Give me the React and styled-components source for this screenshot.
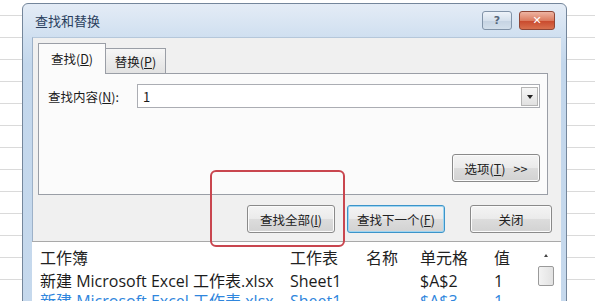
import React from 'react'
import styled, {createGlobalStyle, css} from 'styled-components'

const Global = createGlobalStyle`
body {
  margin: 0;
  background: #fff;
  font-family: "Noto Sans CJK SC", "Noto Sans", sans-serif;
  color: #1b1b1b;
}
`

const Page = styled.div`
position: relative;
width: 595px;
height: 301px;
overflow: hidden;
box-sizing: border-box;
padding: 3px 0 0 22px;
background: repeating-linear-gradient(to bottom, transparent 0 15px, #dadada 15px 16px, transparent 16px 22px);
`

const Window = styled.div`
width: 545px;
height: 320px;
box-sizing: border-box;
border: 1px solid #74869b;
border-radius: 6px 6px 0 0;
background: linear-gradient(#e4ecf6, #cfdff0 34px, #c3d7ec 60px, #c6d9ed);
display: flex;
flex-direction: column;
`

const TitleBar = styled.div`
height: 33px;
display: flex;
align-items: center;
padding: 0 11px 0 12px;
`

const Title = styled.div`
flex: 1;
font-size: 13px;
color: #2a3f5e;
`

const capBtn = css`
height: 19px;
box-sizing: border-box;
border-radius: 3px;
display: flex;
align-items: center;
justify-content: center;
font-family: "DejaVu Sans", sans-serif;
`

const HelpBtn = styled.div`
${capBtn}
width: 30px;
margin-right: 7px;
border: 1px solid #8193a8;
background: linear-gradient(#eef3f9, #d6e1ed 50%, #c5d3e2 51%, #d3dfeb);
color: #56667a;
font-size: 11px;
font-weight: bold;
`

const CloseBtn = styled.div`
${capBtn}
width: 36px;
border: 1px solid #8e4636;
background: linear-gradient(#eeb4a2, #dc7c60 50%, #c8482c 51%, #d8704e);
color: #fff;
font-weight: bold;
font-size: 11px;
`

const Body = styled.div`
flex: 1;
margin: 0 5px 0 9px;
background: #f0f0f0;
border-left: 1px solid #9db1c8;
border-top: 1px solid #b5c7da;
display: flex;
flex-direction: column;
`

const Top = styled.div`
padding: 5px 11px 0 5px;
`

const Tabs = styled.div`
display: flex;
align-items: flex-end;
height: 30px;
`

const Tab = styled.div`
position: relative;
box-sizing: border-box;
border: 1px solid #9a9ea6;
border-bottom: none;
font-size: 12.5px;
display: flex;
align-items: center;
justify-content: center;
${({active}) => active ? css`
  width: 68px;
  height: 31px;
  margin-bottom: -1px;
  z-index: 1;
  background: #fbfbfb;
  padding-bottom: 2px;
` : css`
  width: 61px;
  height: 25px;
  margin-left: -1px;
  background: linear-gradient(#f6f6f6, #e2e2e2);
`}
`

const Panel = styled.div`
width: 510px;
height: 122px;
box-sizing: border-box;
border: 1px solid #9a9ea6;
background: #fbfbfb;
padding: 10px 7px 12px 9px;
display: flex;
flex-direction: column;
`

const Field = styled.div`
display: flex;
align-items: center;
height: 24px;
`

const Label = styled.div`
width: 89px;
font-size: 12.5px;
`

const Key = styled.span`
text-decoration: underline;
`

const Input = styled.div`
flex: 1;
height: 24px;
box-sizing: border-box;
border: 1px solid #abadb3;
background: #fff;
display: flex;
align-items: center;
padding: 0 1px 0 5px;
font-size: 13px;
`

const Value = styled.div`
flex: 1;
`

const Drop = styled.div`
width: 17px;
height: 19px;
box-sizing: border-box;
border: 1px solid #b5b5b5;
background: linear-gradient(#f7f7f7, #e1e1e1);
display: flex;
align-items: center;
justify-content: center;
&::after {
  content: "";
  border-left: 3.5px solid transparent;
  border-right: 3.5px solid transparent;
  border-top: 4px solid #222;
  margin-top: 2px;
}
`

const Button = styled.div`
box-sizing: border-box;
width: ${({w}) => w}px;
height: 28px;
border: 1px solid ${({focus}) => focus ? '#3c94c9' : '#8a8a8a'};
box-shadow: ${({focus}) => focus ? 'inset 0 0 0 1px #9fd5f1' : 'inset 0 0 0 1px #fbfbfb'};
border-radius: 3px;
background: linear-gradient(#f4f4f4, #ebebeb 48%, #dcdcdc 52%, #d2d2d2);
display: flex;
align-items: center;
justify-content: center;
font-size: 12.5px;
color: #222;
`

const OptionBtn = styled(Button)`
margin-top: auto;
align-self: flex-end;
gap: 8px;
`

const Actions = styled.div`
display: flex;
justify-content: flex-end;
padding: 10px 0 8px;
margin-right: -2px;
`

const Gap = styled.div`
width: ${({w}) => w}px;
`

const List = styled.div`
flex: 1;
margin-left: -1px;
background: #fff;
border-top: 1px solid #a9a9a9;
display: flex;
padding-top: 3px;
`

const Table = styled.div`
flex: 1;
`

const cols = css`
display: grid;
grid-template-columns: 250px 76px 54px 74px 1fr;
padding-left: 8px;
font-family: "Open Sans", "Noto Sans CJK SC", sans-serif;
font-size: 16px;
line-height: 20px;
white-space: nowrap;
align-items: center;
`

const Head = styled.div`
${cols}
height: 26px;
color: #222;
`

const Row = styled.div`
${cols}
height: 20px;
color: ${({blue}) => blue ? '#2f86dd' : '#1b1b1b'};
`

const Scroll = styled.div`
width: 18px;
margin-right: 6px;
display: flex;
flex-direction: column;
align-items: center;
padding-top: 9px;
`

const Up = styled.div`
border-left: 2.5px solid transparent;
border-right: 2.5px solid transparent;
border-bottom: 3px solid #444;
margin-bottom: 9px;
`

const Thumb = styled.div`
width: 16px;
height: 20px;
box-sizing: border-box;
border: 1px solid #9a9a9a;
border-radius: 2px;
background: linear-gradient(to right, #f3f3f3, #e2e2e2);
`

const Marker = styled.div`
position: absolute;
left: 210px;
top: 170px;
width: 135px;
height: 77px;
box-sizing: border-box;
border: 2px solid #c9464f;
border-radius: 6px;
`

const rows = [
  {book: '新建 Microsoft Excel 工作表.xlsx', sheet: 'Sheet1', cell: '$A$2', val: '1'},
  {book: '新建 Microsoft Excel 工作表.xlsx', sheet: 'Sheet1', cell: '$A$3', val: '1', blue: true},
]

const App = () => (
  <Page>
    <Global />
    <Window>
      <TitleBar>
        <Title>查找和替换</Title>
        <HelpBtn>?</HelpBtn>
        <CloseBtn>✕</CloseBtn>
      </TitleBar>
      <Body>
        <Top>
          <Tabs>
            <Tab active>查找(<Key>D</Key>)</Tab>
            <Tab>替换(<Key>P</Key>)</Tab>
          </Tabs>
          <Panel>
            <Field>
              <Label>查找内容(<Key>N</Key>):</Label>
              <Input>
                <Value>1</Value>
                <Drop />
              </Input>
            </Field>
            <OptionBtn w={88}>
              <span>选项(<Key>T</Key>)</span>
              <span>&gt;&gt;</span>
            </OptionBtn>
          </Panel>
          <Actions>
            <Button w={88}>查找全部(<Key>I</Key>)</Button>
            <Gap w={12} />
            <Button w={98} focus>查找下一个(<Key>F</Key>)</Button>
            <Gap w={25} />
            <Button w={82}>关闭</Button>
          </Actions>
        </Top>
        <List>
          <Table>
            <Head>
              <span>工作簿</span>
              <span>工作表</span>
              <span>名称</span>
              <span>单元格</span>
              <span>值</span>
            </Head>
            {rows.map((r, i) => (
              <Row key={i} blue={r.blue}>
                <span>{r.book}</span>
                <span>{r.sheet}</span>
                <span></span>
                <span>{r.cell}</span>
                <span>{r.val}</span>
              </Row>
            ))}
          </Table>
          <Scroll>
            <Up />
            <Thumb />
          </Scroll>
        </List>
      </Body>
    </Window>
    <Marker />
  </Page>
)

export default App
